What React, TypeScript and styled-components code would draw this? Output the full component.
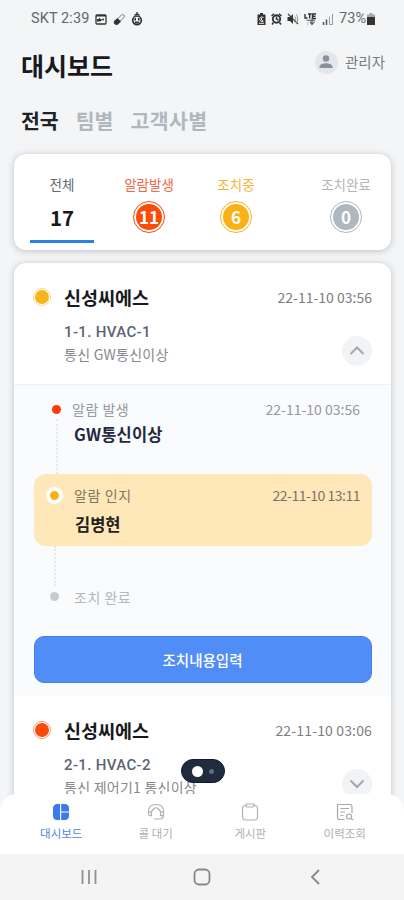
import React from "react";
import styled, { createGlobalStyle } from "styled-components";

const GlobalStyle = createGlobalStyle`
  * { box-sizing: border-box; }
  body { margin: 0; background: #f3f5f7; }
`;

const Screen = styled.div`
  width: 404px;
  height: 900px;
  overflow: hidden;
  display: flex;
  flex-direction: column;
  background: #f3f5f7;
  position: relative;
  font-family: "Noto Sans CJK KR", sans-serif;
`;

const Text = styled.span<{ $size: number; $color: string; $weight?: number; $spacing?: number; $latin?: string }>`
  display: block;
  white-space: nowrap;
  line-height: 20px;
  font-size: ${(p) => p.$size}px;
  color: ${(p) => p.$color};
  font-weight: ${(p) => p.$weight ?? 400};
  letter-spacing: ${(p) => p.$spacing ?? 0}px;
  ${(p) => (p.$latin ? `font-family: "${p.$latin}", "Noto Sans CJK KR", sans-serif;` : "")}
`;

const Scroll = styled.main`
  height: 814px;
  flex: none;
  overflow: hidden;
`;

const StatusBar = styled.div`
  height: 38px;
  padding: 0 29px 0 31px;
  display: flex;
  align-items: center;
  justify-content: space-between;
`;

const StatusGroup = styled.div<{ $gap: number }>`
  display: flex;
  align-items: center;
  gap: ${(p) => p.$gap}px;
`;

const Header = styled.header`
  height: 54px;
  padding: 0 19px 0 21px;
  display: flex;
  align-items: center;
  justify-content: space-between;
`;

const Profile = styled.div`
  display: flex;
  align-items: center;
  gap: 7px;
  margin-top: -6px;
`;

const Avatar = styled.div`
  width: 23px;
  height: 23px;
  border-radius: 50%;
  background: #e3e7ec;
  display: grid;
  place-items: center;
`;

const Tabs = styled.nav`
  height: 62px;
  padding: 18px 0 0 21px;
  display: flex;
  gap: 17px;
`;

const Card = styled.section`
  margin: 0 13px 0 14px;
  border-radius: 12px;
  background: #fff;
  box-shadow: 0 1px 7px rgba(70, 76, 84, 0.3);
  overflow: hidden;
`;

const Summary = styled(Card)`
  height: 96px;
  margin-bottom: 13px;
  padding: 0 13px 0 16px;
  display: grid;
  grid-template-columns: 64px 110px 64px 1fr 64px;
`;

const Stat = styled.div<{ $active?: boolean; $column?: number }>`
  display: flex;
  flex-direction: column;
  align-items: center;
  height: 89px;
  padding-top: 20px;
  ${(p) => (p.$column ? `grid-column: ${p.$column};` : "")}
  border-bottom: 3px solid ${(p) => (p.$active ? "#2f80e2" : "transparent")};
`;

const StatValue = styled.div`
  height: 47px;
  display: flex;
  align-items: center;
`;

const CountRing = styled.div<{ $color: string }>`
  width: 32px;
  height: 32px;
  margin-top: -1px;
  padding: 2px;
  border: 1px solid ${(p) => p.$color};
  border-radius: 50%;
`;

const Count = styled.div<{ $color: string }>`
  height: 26px;
  border-radius: 50%;
  background: ${(p) => p.$color};
  display: grid;
  place-items: center;
`;

const AlarmHead = styled.div<{ $open?: boolean }>`
  height: 122px;
  padding: 24px 19px 0 19px;
  border-bottom: 1px solid ${(p) => (p.$open ? "#eef0f3" : "transparent")};
`;

const Row = styled.div<{ $height?: number }>`
  display: flex;
  align-items: center;
  height: ${(p) => p.$height ?? 20}px;
`;

const Push = styled.div`
  margin-left: auto;
`;

const StateDot = styled.div<{ $color: string }>`
  width: 18px;
  height: 18px;
  margin-right: 13px;
  padding: 1px;
  border: 1px solid ${(p) => p.$color}88;
  border-radius: 50%;
  &::before {
    content: "";
    display: block;
    height: 14px;
    border-radius: 50%;
    background: ${(p) => p.$color};
  }
`;

const Detail = styled.div`
  display: flex;
  justify-content: space-between;
  padding: 13px 0 0 31px;
`;

const DetailText = styled.div`
  display: flex;
  flex-direction: column;
  gap: 2px;
  padding-top: 2px;
`;

const RoundButton = styled.button`
  width: 30px;
  height: 30px;
  margin-top: 16px;
  padding: 0;
  border: 0;
  border-radius: 50%;
  background: #f1f3f5;
  display: grid;
  place-items: center;
`;

const Timeline = styled.div`
  height: 311px;
  padding: 0 19px;
  background: #f9fbfd;
  display: flex;
  flex-direction: column;
`;

const Step = styled.div<{ $height: number; $top: number; $left: number; $active?: boolean }>`
  height: ${(p) => p.$height}px;
  padding: ${(p) => p.$top}px 12px 0 ${(p) => p.$left}px;
  display: flex;
  align-items: flex-start;
  border-radius: 12px;
  margin: 0 0 0 1px;
  ${(p) => (p.$active ? "background: #fee7b8;" : "")}
`;

const Marker = styled.div<{ $pull: number }>`
  width: 17px;
  height: 100%;
  display: flex;
  flex-direction: column;
  align-items: center;
  margin-right: ${(p) => p.$pull}px;
`;

const Bullet = styled.div<{ $color: string; $ring?: boolean }>`
  width: ${(p) => (p.$ring ? 17 : 9)}px;
  height: ${(p) => (p.$ring ? 17 : 9)}px;
  margin: ${(p) => (p.$ring ? 2 : 6)}px 0 5px;
  flex: none;
  border: ${(p) => (p.$ring ? 4 : 0)}px solid #fff;
  border-radius: 50%;
  background: ${(p) => p.$color};
`;

const Dots = styled.div<{ $height?: number }>`
  width: 0;
  flex: ${(p) => (p.$height ? `0 0 ${p.$height}px` : "1")};
  border-left: 2px dotted #e7e9eb;
`;

const StepBody = styled.div`
  display: flex;
  flex-direction: column;
`;

const StepTitle = styled.div<{ $height: number; $indent?: number }>`
  display: flex;
  align-items: center;
  height: ${(p) => p.$height}px;
  padding-left: ${(p) => p.$indent ?? 0}px;
`;

const Action = styled.button`
  width: 338px;
  height: 47px;
  margin-top: 26px;
  padding: 0;
  flex: none;
  border: 1px solid #4280ee;
  border-radius: 10px;
  background: #518df7;
  display: grid;
  place-items: center;
  align-self: center;
  font-family: inherit;
`;

const BottomNav = styled.nav`
  height: 60px;
  margin-top: -20px;
  flex: none;
  position: relative;
  border-radius: 17px 17px 0 0;
  background: #fff;
  display: grid;
  grid-template-columns: repeat(4, 94.5px);
  padding-left: 14px;
`;

const NavItem = styled.div`
  display: flex;
  flex-direction: column;
  align-items: center;
  padding-top: 9px;
  gap: 2px;
`;

const SystemBar = styled.footer`
  flex: 1;
  background: #f4f4f4;
  display: grid;
  grid-template-columns: repeat(3, 113px);
  justify-content: center;
  justify-items: center;
  align-items: center;
`;

const FloatingToggle = styled.div`
  position: absolute;
  left: 181px;
  top: 759px;
  width: 44px;
  height: 24px;
  border-radius: 12px;
  background: #202b3e;
  border: 1px solid #101a2c;
  display: flex;
  align-items: center;
  padding-left: 10px;
  gap: 6px;
`;

const ToggleDot = styled.i<{ $size: number; $color: string }>`
  width: ${(p) => p.$size}px;
  height: ${(p) => p.$size}px;
  border-radius: 50%;
  background: ${(p) => p.$color};
`;

const stats = [
  { label: "알람발생", value: "11", color: "#fa4b08", text: "#ef6a45", column: 2 },
  { label: "조치중", value: "6", color: "#f9b116", text: "#f5b637", column: 3 },
  { label: "조치완료", value: "0", color: "#b0b7bf", text: "#b3b6ba", column: 5 },
];

function GalleryIcon() {
  return (
    <svg width="12" height="11" viewBox="0 0 12 11">
      <rect x="1" y="1" width="10" height="9" rx="1" fill="none" stroke="#333" strokeWidth="1.3" />
      <path d="M1 1h10v1.500H1zM2 5h2V3.500l2 2 3-1v2L7.500 6 5 7.500H2z" fill="#333" />
    </svg>
  );
}

function PillIcon() {
  return (
    <svg width="12" height="13" viewBox="0 0 12 13">
      <path d="M5 5.500 8.500 2a1.700 1.700 0 0 1 2.400 2.400L7.400 8" fill="none" stroke="#777" />
      <path d="M4.500 5 8 8.500 5.500 11a2.600 2.600 0 0 1-4-3.500z" fill="#333" />
    </svg>
  );
}

function AppIcon() {
  return (
    <svg width="12" height="14" viewBox="0 0 12 14">
      <path d="M6 3V0M3.500 3.500 6 1.500l2.500 2" stroke="#333" fill="none" strokeWidth="1.300" />
      <circle cx="6" cy="8.300" r="4.300" fill="none" stroke="#333" strokeWidth="1.700" />
      <path d="M4.200 6v2.500M7.800 6v2.500" stroke="#333" strokeWidth="1.600" />
      <path d="M4 9.500h4v2H4z" fill="#333" />
    </svg>
  );
}

function SaverIcon() {
  return (
    <svg width="9" height="13" viewBox="0 0 9 13">
      <path d="M3 0h3v1.500h2.500V12h-8V1.500H3z" fill="#333" />
      <path d="M6.500 4.500a2.300 2.300 0 1 0 0 3.500M4.500 5v2l1.500 1" fill="none" stroke="#eee" />
      <path d="M2 10.300h5" stroke="#eee" />
    </svg>
  );
}

function AlarmIcon() {
  return (
    <svg width="11" height="12" viewBox="0 0 11 12">
      <circle cx="5.500" cy="6" r="3.700" fill="none" stroke="#333" strokeWidth="1.900" />
      <path d="M.5 3 3 .8M10.500 3 8 .8M2.500 9.500 1 11.500M8.500 9.500l1.500 2M5.500 3.500V6l2 1" stroke="#333" strokeWidth="1.500" fill="none" />
    </svg>
  );
}

function MuteIcon() {
  return (
    <svg width="12" height="12" viewBox="0 0 12 12">
      <path d="M.5 4H3l3-3v10L3 8H.5z" fill="#333" />
      <path d="M1 1l10 10" stroke="#444" strokeWidth="1.200" />
      <path d="M8 3.500q2 2.500 0 5M9.500 1.500q3 4.500 0 9" fill="none" stroke="#999" />
    </svg>
  );
}

function LteIcon() {
  return (
    <svg width="13" height="13" viewBox="0 0 13 13">
      <path d="M1 1v4h2.500M4 1h3.500M5.700 1v4.500M12 1H8.500v4.500H12M8.500 3.200h3" fill="none" stroke="#333" strokeWidth="1.400" />
      <path d="M2.500 7.300h8.500M8 5.500v6M6 8.500l2 3 2.500-3" fill="none" stroke="#555" strokeWidth="1.100" />
      <path d="M4 9v3" stroke="#bbb" />
    </svg>
  );
}

function SignalIcon() {
  return (
    <svg width="12" height="12" viewBox="0 0 12 12">
      <path d="M1.500 9v3M4.500 6.500V12" stroke="#555" strokeWidth="1.500" />
      <path d="M7.500 4v7.500M10.500 1v10.500H7.500" fill="none" stroke="#999" />
    </svg>
  );
}

function BatteryIcon() {
  return (
    <svg width="8" height="12" viewBox="0 0 8 12">
      <path d="M2.500 0h3v1.500H8V12H0V1.500h2.500z" fill="#aaa" />
      <path d="M0 4h8v8H0z" fill="#333" />
    </svg>
  );
}

function Chevron({ down }: { down?: boolean }) {
  return (
    <svg width="18" height="12" viewBox="0 0 18 12">
      <path d={down ? "M2.500 2.500 9 9l6.500-6.500" : "M2.500 9 9 2.500 15.500 9"} fill="none" stroke="#a3a9b2" strokeWidth="2.100" />
    </svg>
  );
}

function DashboardIcon() {
  return (
    <svg width="18" height="18" viewBox="0 0 18 18" fill="#397bea">
      <path d="M8 1v16H5.500Q1 17 1 12.500v-7Q1 1 5.500 1z" />
      <path d="M9.200 1h3.300Q17 1 17 5.500v2.900H9.200zM9.200 9.600H17v2.900q0 4.500-4.500 4.500H9.200z" />
    </svg>
  );
}

function HeadsetIcon() {
  return (
    <svg width="18" height="18" viewBox="0 0 18 18" fill="none" stroke="#b0b0b0" strokeWidth="1.200">
      <path d="M1.500 10.500V8.500Q1.500 1.500 9 1.500t7.500 7V12q0 4-4 4H10" />
      <path d="M4.500 8.500 7 5.500q2-1.500 4 0l2.500 3M1.500 9.500l3-1v4.200H3.500Q1.500 12.700 1.500 10.500M16.500 9.500l-3-1v4.200h3M7 16h3" />
    </svg>
  );
}

function ClipboardIcon() {
  return (
    <svg width="18" height="18" viewBox="0 0 18 18" fill="none" stroke="#b0b0b0" strokeWidth="1.200">
      <path d="M5 2.500Q1.500 2.500 1.500 5.500v8q0 3.500 3.500 3.500h8q3.500 0 3.500-3.500v-8q0-3-3.500-3" />
      <path d="M5 1h8v1.500q0 1.500-1.500 1.500h-5Q5 4 5 2.500z" />
    </svg>
  );
}

function HistoryIcon() {
  return (
    <svg width="18" height="18" viewBox="0 0 18 18" fill="none" stroke="#aaa" strokeWidth="1.200">
      <path d="M8.500 16.500h-5Q1.500 16.500 1.500 14V1.500H14q2 0 2 2.500v6M4.500 5.500H13M4.500 9H9M4.500 12.500h3" />
      <circle cx="13" cy="13.500" r="2.500" />
      <path d="m15 15.500 2 1.500" />
    </svg>
  );
}

const navItems = [
  { label: "대시보드", icon: <DashboardIcon />, color: "#4c86ea" },
  { label: "콜 대기", icon: <HeadsetIcon />, color: "#b0b0b0" },
  { label: "게시판", icon: <ClipboardIcon />, color: "#b0b0b0" },
  { label: "이력조회", icon: <HistoryIcon />, color: "#b0b0b0" },
];

type AlarmProps = {
  color: string;
  date: string;
  dateSpacing?: number;
  device: string;
  message: string;
  open?: boolean;
};

function AlarmSummary({ color, date, dateSpacing, device, message, open }: AlarmProps) {
  return (
    <AlarmHead $open={open}>
      <Row>
        <StateDot $color={color} />
        <Text $size={18.5} $color="#17191d" $weight={700}>신성씨에스</Text>
        <Push>
          <Text $size={14} $color="#7b7e83" $spacing={dateSpacing}>{date}</Text>
        </Push>
      </Row>
      <Detail>
        <DetailText>
          <Text $size={15} $color="#5b6472" $weight={500} $spacing={0.35} $latin="Roboto">{device}</Text>
          <Text $size={14} $color="#85888d" $spacing={0.25}>{message}</Text>
        </DetailText>
        <RoundButton><Chevron down={!open} /></RoundButton>
      </Detail>
    </AlarmHead>
  );
}

export default function App() {
  return (
    <Screen>
      <GlobalStyle />
      <Scroll>
        <StatusBar>
          <StatusGroup $gap={6}>
            <Text $size={14.5} $color="#65686b" $spacing={0.1} $latin="Roboto">SKT 2:39</Text>
            <GalleryIcon />
            <PillIcon />
            <AppIcon />
          </StatusGroup>
          <StatusGroup $gap={5}>
            <SaverIcon />
            <AlarmIcon />
            <MuteIcon />
            <LteIcon />
            <SignalIcon />
            <StatusGroup $gap={1}>
              <Text $size={14.5} $color="#65686b" $latin="Roboto">73%</Text>
              <BatteryIcon />
            </StatusGroup>
          </StatusGroup>
        </StatusBar>
        <Header>
          <Text $size={25} $color="#17191d" $weight={700}>대시보드</Text>
          <Profile>
            <Avatar>
              <svg width="16" height="16" viewBox="0 0 16 16" fill="#89919e">
                <circle cx="8" cy="4.500" r="3.200" />
                <path d="M1.500 14v-1.500C2 10 5 9.200 8 9.200s6 .8 6.500 3.300V14z" />
              </svg>
            </Avatar>
            <Text $size={14.5} $color="#777b80">관리자</Text>
          </Profile>
        </Header>
        <Tabs>
          <Text $size={20.5} $color="#202226" $weight={700}>전국</Text>
          <Text $size={20.5} $color="#b0b8bf" $weight={700}>팀별</Text>
          <Text $size={20.5} $color="#b0b8bf" $weight={700} $spacing={0.4}>고객사별</Text>
        </Tabs>
        <Summary>
          <Stat $active>
            <Text $size={13.5} $color="#66696e">전체</Text>
            <StatValue><Text $size={20.5} $color="#17191d" $weight={700}>17</Text></StatValue>
          </Stat>
          {stats.map((s) => (
            <Stat key={s.label} $column={s.column}>
              <Text $size={13.5} $color={s.text}>{s.label}</Text>
              <StatValue>
                <CountRing $color={s.color}>
                  <Count $color={s.color}><Text $size={17} $color="#fff" $weight={700}>{s.value}</Text></Count>
                </CountRing>
              </StatValue>
            </Stat>
          ))}
        </Summary>
        <Card>
          <AlarmSummary open color="#f6b51b" date="22-11-10 03:56" device="1-1. HVAC-1" message="통신 GW통신이상" />
          <Timeline>
            <Step $height={89} $top={14} $left={14}>
              <Marker $pull={7}>
                <Bullet $color="#fb3d0b" />
                <Dots />
              </Marker>
              <StepBody>
                <Text $size={14} $color="#96999e" $spacing={0.5}>알람 발생</Text>
                <StepTitle $height={30} $indent={2}>
                  <Text $size={16.5} $color="#25293d" $weight={700} $spacing={0.2}>GW통신이상</Text>
                </StepTitle>
              </StepBody>
              <Push><Text $size={14} $color="#96999e">22-11-10 03:56</Text></Push>
            </Step>
            <Step $height={72} $top={11} $left={12} $active>
              <Marker $pull={11}><Bullet $color="#f6b117" $ring /></Marker>
              <StepBody>
                <Text $size={14} $color="#807866" $spacing={0.6}>알람 인지</Text>
                <StepTitle $height={38} $indent={1}>
                  <Text $size={16.5} $color="#24211c" $weight={700}>김병현</Text>
                </StepTitle>
              </StepBody>
              <Push><Text $size={14} $color="#7b7467" $spacing={-0.5}>22-11-10 13:11</Text></Push>
            </Step>
            <Step $height={64} $top={0} $left={12}>
              <Marker $pull={11}>
                <Dots $height={40} />
                <Bullet $color="#c7cbce" />
              </Marker>
              <StepTitle $height={102}>
                <Text $size={14} $color="#b3b7ba" $spacing={0.5}>조치 완료</Text>
              </StepTitle>
            </Step>
            <Action><Text $size={14.5} $color="#fff" $weight={500}>조치내용입력</Text></Action>
          </Timeline>
          <AlarmSummary color="#fb4a09" date="22-11-10 03:06" dateSpacing={0.15} device="2-1. HVAC-2" message="통신 제어기1 통신이상" />
        </Card>
      </Scroll>
      <BottomNav>
        {navItems.map((n) => (
          <NavItem key={n.label}>
            {n.icon}
            <Text $size={11.5} $color={n.color}>{n.label}</Text>
          </NavItem>
        ))}
      </BottomNav>
      <SystemBar>
        <svg width="16" height="16" viewBox="0 0 16 16" stroke="#909090" strokeWidth="1.800">
          <path d="M1.500 1v14M8 1v14M14.500 1v14" />
        </svg>
        <svg width="18" height="18" viewBox="0 0 18 18" fill="none" stroke="#888" strokeWidth="1.800">
          <rect x="1.500" y="1.500" width="15" height="15" rx="4.500" />
        </svg>
        <svg width="10" height="16" viewBox="0 0 10 16" fill="none" stroke="#888" strokeWidth="1.800">
          <path d="M9 1 2 8l7 7" />
        </svg>
      </SystemBar>
      <FloatingToggle>
        <ToggleDot $size={11} $color="#fff" />
        <ToggleDot $size={5} $color="#5f6b80" />
      </FloatingToggle>
    </Screen>
  );
}
